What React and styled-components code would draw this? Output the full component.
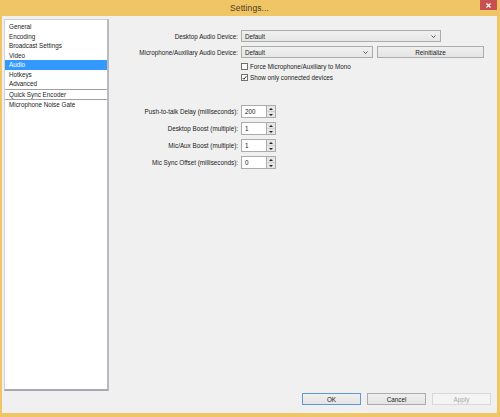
import React from 'react';
import styled, { createGlobalStyle } from 'styled-components';

const GlobalStyle = createGlobalStyle`
  html, body {
    margin: 0;
    padding: 0;
    background: #efc566;
  }
  body {
    font-family: "Liberation Sans", Arial, sans-serif;
  }
`;

const Frame = styled.div`
  width: 500px;
  height: 417px;
  background: #efc566;
  display: flex;
  flex-direction: column;
  box-sizing: border-box;
  padding: 0 3px 4px 2px;
`;

const TitleBar = styled.div`
  height: 16px;
  position: relative;
  display: flex;
  align-items: center;
  justify-content: center;
  font-size: 8.5px;
  color: #4b3e22;
  letter-spacing: 0.1px;
  padding-bottom: 1px;
  box-sizing: border-box;
`;

const CloseBtn = styled.div`
  position: absolute;
  right: 0;
  top: 0;
  width: 17px;
  height: 10px;
  background: #c75050;
  display: flex;
  align-items: center;
  justify-content: center;
`;

const Client = styled.div`
  flex: 1;
  background: #f0f0f0;
  display: flex;
  flex-direction: column;
  font-size: 6.3px;
  color: #1a1a1a;
`;

const Main = styled.div`
  display: flex;
  height: 375px;
  padding-top: 3px;
  box-sizing: border-box;
`;

const ListBox = styled.div`
  width: 105px;
  margin-left: 2px;
  background: #fff;
  border: 1px solid #d0d0d0;
  border-right: 2px solid #b8bac0;
  border-bottom: 2px solid #a6a9b2;
  box-sizing: border-box;
  padding-top: 2px;
`;

const ListItem = styled.div`
  height: 9.5px;
  line-height: 9.5px;
  padding-left: 4px;
  background: ${p => (p.$selected ? '#3399ff' : 'transparent')};
  color: ${p => (p.$selected ? '#fff' : '#1a1a1a')};
  border-bottom: ${p => (p.$divider ? '1px solid #a0a0a0' : 'none')};
`;

const Pane = styled.div`
  flex: 1;
  display: flex;
  flex-direction: column;
  padding-top: 11px;
`;

const FormGrid = styled.div`
  display: grid;
  grid-template-columns: 129px auto;
  column-gap: 3px;
  align-items: center;
  row-gap: ${p => p.$gap || 4}px;
  margin-top: ${p => p.$top || 0}px;
`;

const Label = styled.div`
  text-align: right;
  white-space: nowrap;
`;

const Controls = styled.div`
  display: flex;
  align-items: center;
  gap: 4px;
`;

const Combo = styled.div`
  width: ${p => p.$w}px;
  height: 12px;
  box-sizing: border-box;
  border: 1px solid #acacac;
  background: linear-gradient(#f0f0f0, #e6e6e6);
  display: flex;
  align-items: center;
  justify-content: space-between;
  padding: 0 4px 0 3px;
`;

const Button = styled.div`
  width: ${p => p.$w}px;
  height: 12px;
  box-sizing: border-box;
  border: 1px solid ${p => (p.$default ? '#5d9ad6' : p.$disabled ? '#d8d8d8' : '#acacac')};
  background: ${p => (p.$disabled ? '#f4f4f4' : 'linear-gradient(#efefef, #e4e4e4)')};
  color: ${p => (p.$disabled ? '#a8a8a8' : '#1a1a1a')};
  display: flex;
  align-items: center;
  justify-content: center;
`;

const CheckList = styled.div`
  display: flex;
  flex-direction: column;
  gap: 4px;
  margin-top: 1px;
`;

const CheckRow = styled.div`
  display: flex;
  align-items: center;
  gap: 2px;
  height: 7px;
`;

const Box = styled.div`
  width: 7px;
  height: 7px;
  box-sizing: border-box;
  border: 1px solid #707070;
  background: #fff;
  display: flex;
  align-items: center;
  justify-content: center;
`;

const Spin = styled.div`
  display: flex;
  height: 13px;
`;

const SpinField = styled.div`
  width: 25px;
  box-sizing: border-box;
  border: 1px solid #acacac;
  border-right: none;
  background: #fff;
  padding-left: 3px;
  display: flex;
  align-items: center;
`;

const SpinButtons = styled.div`
  width: 10px;
  display: flex;
  flex-direction: column;
  border: 1px solid #acacac;
  box-sizing: border-box;
  background: #e8e8e8;
`;

const SpinHalf = styled.div`
  flex: 1;
  display: flex;
  align-items: center;
  justify-content: center;
  background: #e6e6e6;
  border-bottom: ${p => (p.$top ? '1px solid #d0d0d0' : 'none')};
`;

const Footer = styled.div`
  display: flex;
  justify-content: flex-end;
  gap: 6px;
  padding: 2px 6px 0 0;
`;

const Arrow = () => (
  <svg width="5" height="3" viewBox="0 0 5 3">
    <path d="M0.5 0.5 L2.5 2.5 L4.5 0.5" fill="none" stroke="#444" strokeWidth="0.9" />
  </svg>
);

const Tri = ({ up }) => (
  <svg width="4" height="2" viewBox="0 0 4 2">
    <path d={up ? 'M0 2 L2 0 L4 2 Z' : 'M0 0 L4 0 L2 2 Z'} fill="#222" />
  </svg>
);

const Check = () => (
  <svg width="6" height="6" viewBox="0 0 6 6">
    <path d="M0.8 3 L2.3 4.6 L5.2 0.8" fill="none" stroke="#222" strokeWidth="1.1" />
  </svg>
);

const SpinBox = ({ value }) => (
  <Spin>
    <SpinField>{value}</SpinField>
    <SpinButtons>
      <SpinHalf $top><Tri up /></SpinHalf>
      <SpinHalf><Tri /></SpinHalf>
    </SpinButtons>
  </Spin>
);

const items = [
  { name: 'General' },
  { name: 'Encoding' },
  { name: 'Broadcast Settings' },
  { name: 'Video' },
  { name: 'Audio', selected: true },
  { name: 'Hotkeys' },
  { name: 'Advanced', divider: true },
  { name: 'Quick Sync Encoder', divider: true },
  { name: 'Microphone Noise Gate' },
];

const spins = [
  ['Push-to-talk Delay (milliseconds):', '200'],
  ['Desktop Boost (multiple):', '1'],
  ['Mic/Aux Boost (multiple):', '1'],
  ['Mic Sync Offset (milliseconds):', '0'],
];

export default function App() {
  return (
    <>
      <GlobalStyle />
      <Frame>
        <TitleBar>
          Settings...
          <CloseBtn>
            <svg width="5" height="5" viewBox="0 0 5 5">
              <path d="M0.5 0.5 L4.5 4.5 M4.5 0.5 L0.5 4.5" stroke="#fff" strokeWidth="1.2" />
            </svg>
          </CloseBtn>
        </TitleBar>
        <Client>
          <Main>
            <ListBox>
              {items.map(it => (
                <ListItem key={it.name} $selected={it.selected} $divider={it.divider}>
                  {it.name}
                </ListItem>
              ))}
            </ListBox>
            <Pane>
              <FormGrid>
                <Label>Desktop Audio Device:</Label>
                <Controls>
                  <Combo $w={200}>Default<Arrow /></Combo>
                </Controls>
                <Label>Microphone/Auxiliary Audio Device:</Label>
                <Controls>
                  <Combo $w={132}>Default<Arrow /></Combo>
                  <Button $w={107}>Reinitialize</Button>
                </Controls>
                <span />
                <CheckList>
                  <CheckRow><Box />Force Microphone/Auxiliary to Mono</CheckRow>
                  <CheckRow><Box><Check /></Box>Show only connected devices</CheckRow>
                </CheckList>
              </FormGrid>
              <FormGrid $gap={4} $top={24}>
                {spins.map(([label, value]) => (
                  <React.Fragment key={label}>
                    <Label>{label}</Label>
                    <SpinBox value={value} />
                  </React.Fragment>
                ))}
              </FormGrid>
            </Pane>
          </Main>
          <Footer>
            <Button $w={59} $default>OK</Button>
            <Button $w={59}>Cancel</Button>
            <Button $w={59} $disabled>Apply</Button>
          </Footer>
        </Client>
      </Frame>
    </>
  );
}
